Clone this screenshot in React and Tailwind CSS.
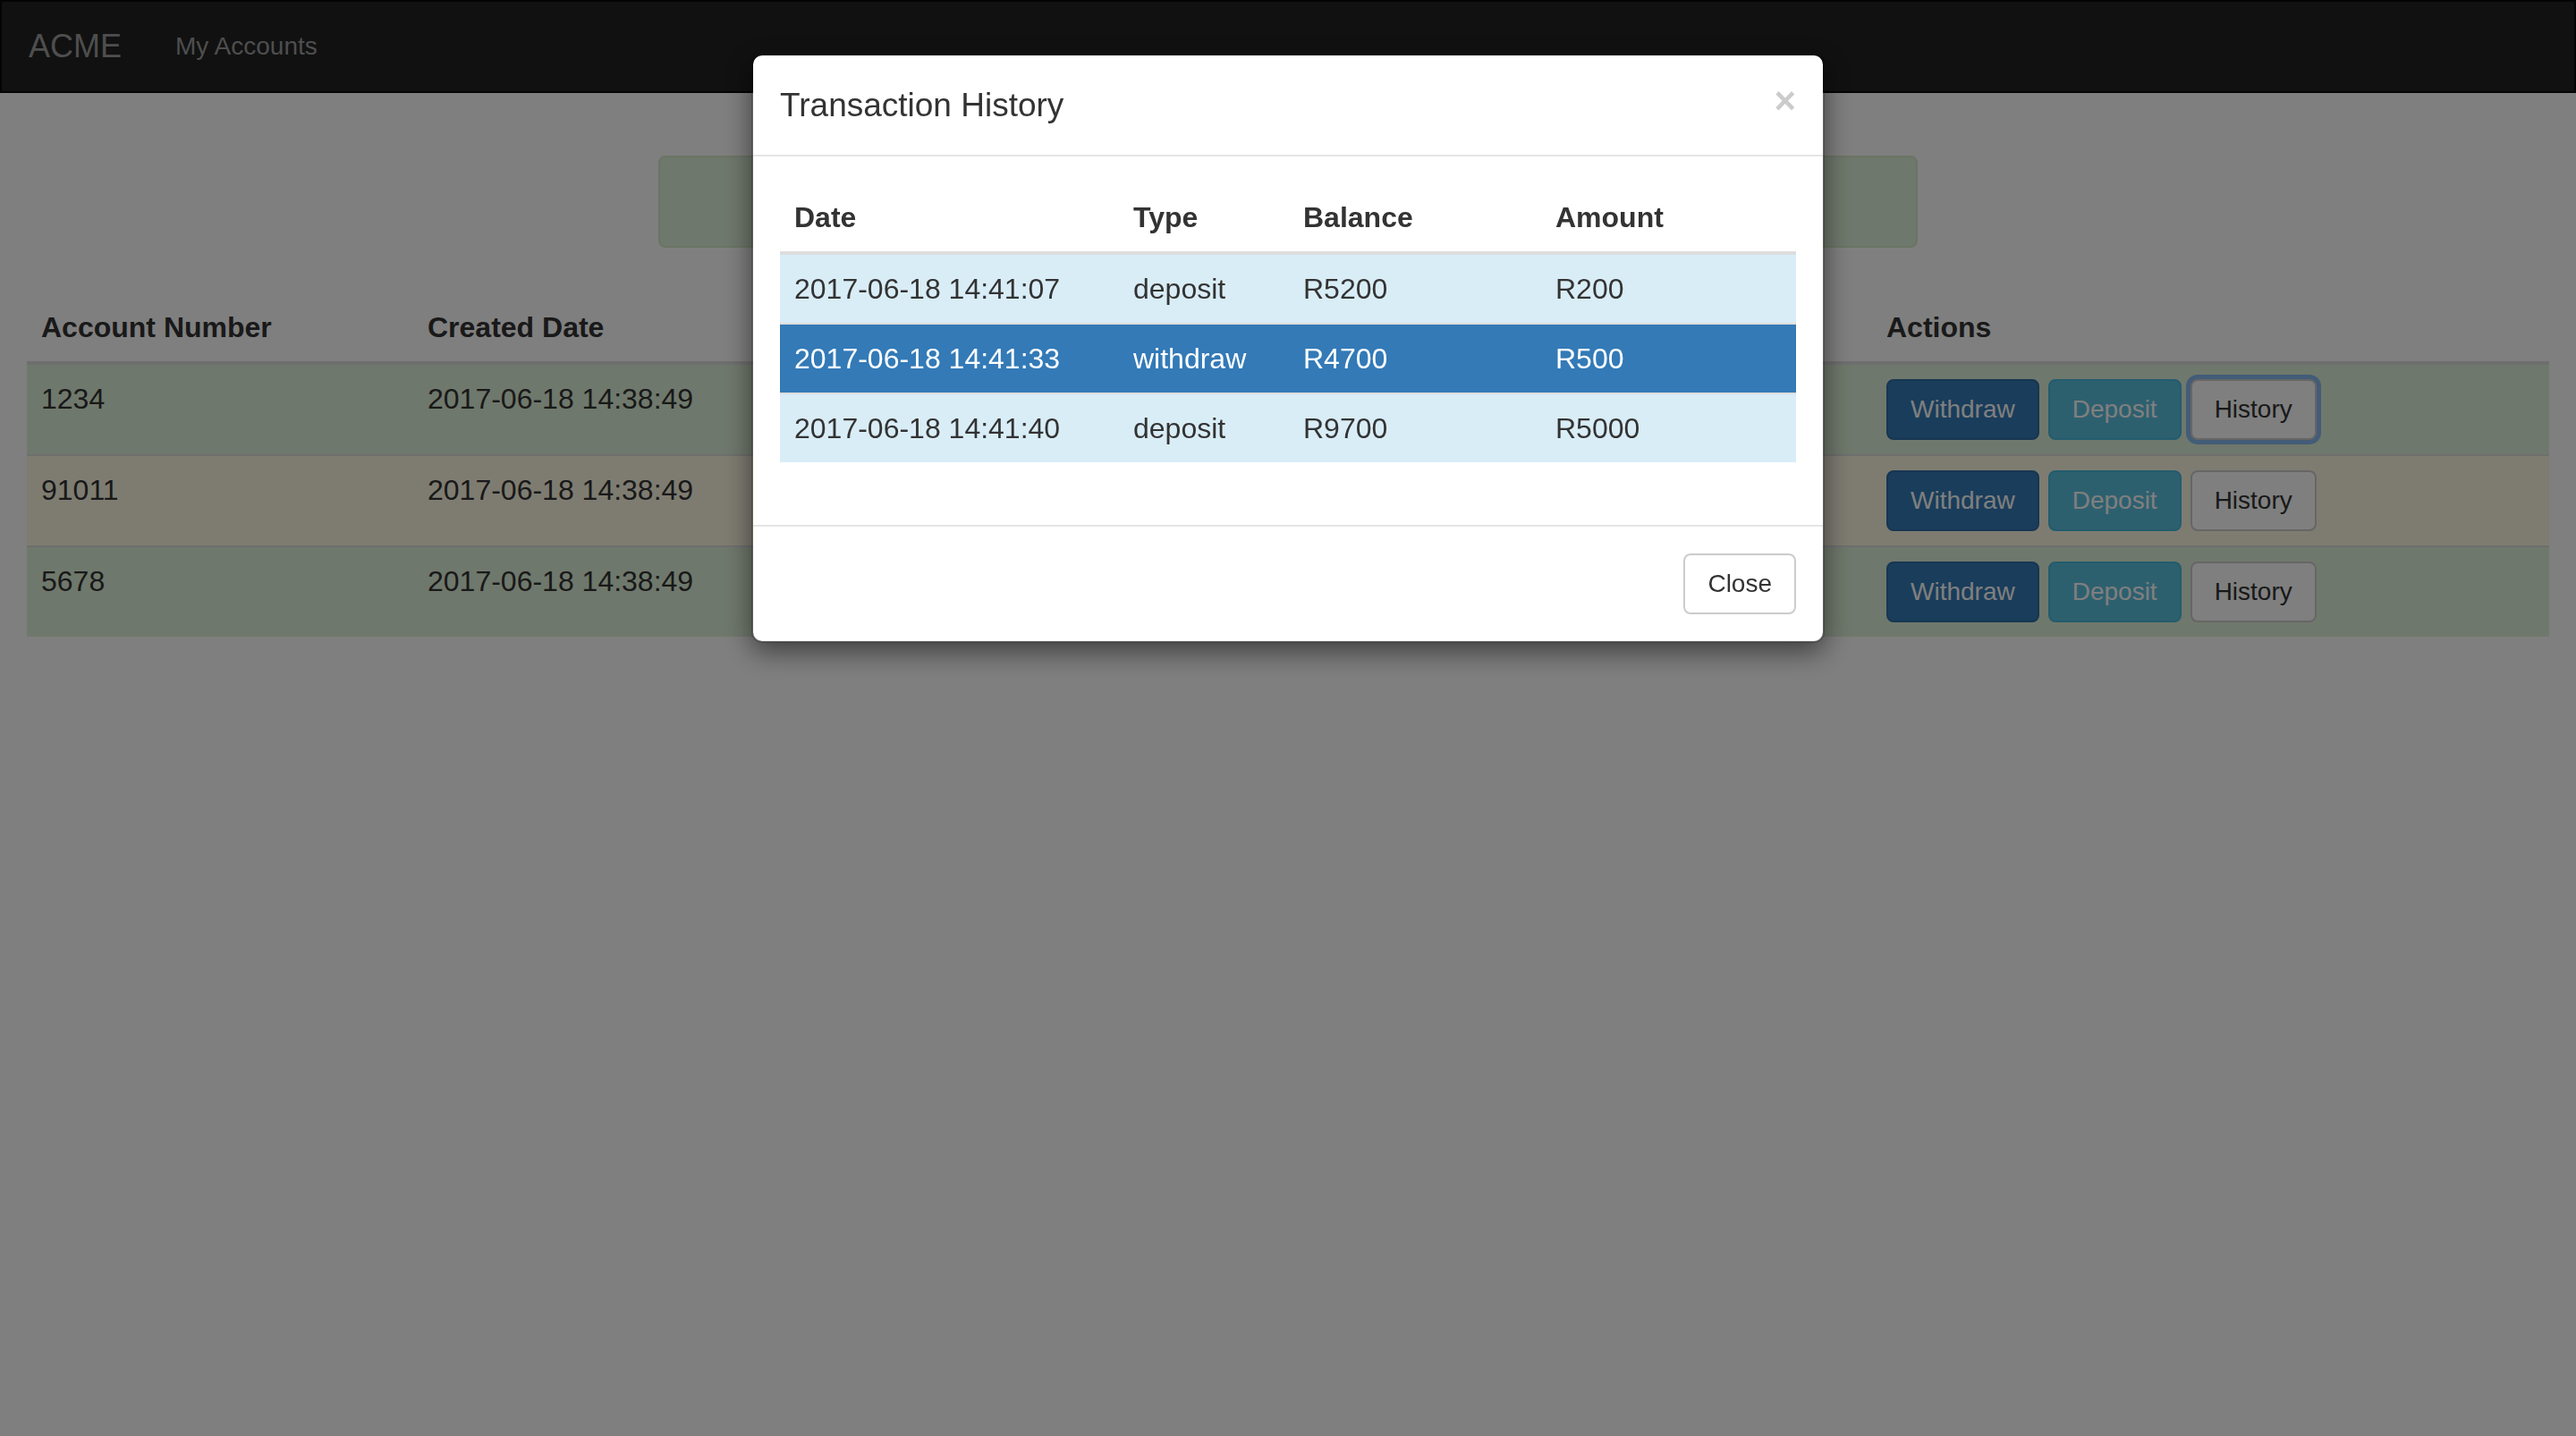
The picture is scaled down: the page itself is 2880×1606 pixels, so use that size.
import React from "react";

const accounts = [
  { number: "1234", created: "2017-06-18 14:38:49", balance: "R9700", tone: "success" },
  { number: "91011", created: "2017-06-18 14:38:49", balance: "R0", tone: "warning" },
  { number: "5678", created: "2017-06-18 14:38:49", balance: "R0", tone: "success" },
];

const transactions = [
  { date: "2017-06-18 14:41:07", type: "deposit", balance: "R5200", amount: "R200", active: false },
  { date: "2017-06-18 14:41:33", type: "withdraw", balance: "R4700", amount: "R500", active: true },
  { date: "2017-06-18 14:41:40", type: "deposit", balance: "R9700", amount: "R5000", active: false },
];

const rowTone = {
  success: "bg-[#dff0d8]",
  warning: "bg-[#fcf8e3]",
};

const Btn = ({ variant = "default", focused = false, children }) => {
  const styles = {
    primary: "bg-[#337ab7] border-[#2e6da4] text-white",
    info: "bg-[#5bc0de] border-[#46b8da] text-white",
    default: "bg-white border-[#ccc] text-[#333]",
  };
  return (
    <button
      className={`rounded-[8px] border-2 px-[25px] py-[12px] text-[28px] leading-[40px] whitespace-nowrap ${
        styles[variant]
      } ${focused ? "border-[#5694dc] shadow-[0_0_0_5px_#86b8ee]" : ""}`}
    >
      {children}
    </button>
  );
};

const Navbar = () => (
  <nav className="flex h-[104px] items-center border-2 border-[#080808] bg-[#222] px-[30px]">
    <span className="text-[36px] leading-[40px] text-[#9d9d9d]">ACME</span>
    <a className="ml-[60px] text-[28px] leading-[40px] text-[#9d9d9d]">My Accounts</a>
  </nav>
);

const AccountsTable = () => (
  <table className="mt-[51px] w-full table-fixed border-collapse text-left text-[32px] leading-[44px]">
    <thead>
      <tr>
        <th className="w-[432px] border-b-4 border-[#ddd] p-[16px] align-bottom font-bold">Account Number</th>
        <th className="w-[500px] border-b-4 border-[#ddd] p-[16px] align-bottom font-bold">Created Date</th>
        <th className="w-[1131px] border-b-4 border-[#ddd] p-[16px] align-bottom font-bold">Balance</th>
        <th className="w-[757px] border-b-4 border-[#ddd] p-[16px] align-bottom font-bold">Actions</th>
      </tr>
    </thead>
    <tbody>
      {accounts.map((acc, i) => (
        <tr key={acc.number} className={rowTone[acc.tone]}>
          <td className="border-t-2 border-[#ddd] p-[16px] align-top">{acc.number}</td>
          <td className="border-t-2 border-[#ddd] p-[16px] align-top">{acc.created}</td>
          <td className="border-t-2 border-[#ddd] p-[16px] align-top">{acc.balance}</td>
          <td className="border-t-2 border-[#ddd] p-[16px] align-top">
            <div className="flex gap-[10px]">
              <Btn variant="primary">Withdraw</Btn>
              <Btn variant="info">Deposit</Btn>
              <Btn focused={i === 0}>History</Btn>
            </div>
          </td>
        </tr>
      ))}
    </tbody>
  </table>
);

const HistoryModal = () => (
  <div className="fixed inset-0 overflow-y-auto">
    <div className="mx-auto mt-[60px] w-[1200px] rounded-[12px] border-2 border-black/20 bg-white bg-clip-padding shadow-[0_10px_30px_rgba(0,0,0,0.5)]">
      <div className="flex items-start justify-between border-b-2 border-[#e5e5e5] p-[30px]">
        <h4 className="text-[37px] font-medium leading-[51px] text-[#333]">Transaction History</h4>
        <button className="text-[42px] font-bold leading-none text-black opacity-20">×</button>
      </div>
      <div className="p-[30px]">
        <table className="mb-[40px] w-full table-fixed border-collapse text-left text-[32px] leading-[44px] text-[#333]">
          <thead>
            <tr>
              <th className="w-[379px] border-b-4 border-[#ddd] p-[16px] align-bottom font-bold">Date</th>
              <th className="w-[190px] border-b-4 border-[#ddd] p-[16px] align-bottom font-bold">Type</th>
              <th className="w-[282px] border-b-4 border-[#ddd] p-[16px] align-bottom font-bold">Balance</th>
              <th className="w-[285px] border-b-4 border-[#ddd] p-[16px] align-bottom font-bold">Amount</th>
            </tr>
          </thead>
          <tbody>
            {transactions.map((t) => (
              <tr key={t.date} className={t.active ? "bg-[#337ab7] text-white" : "bg-[#d9edf7]"}>
                <td className="border-t-2 border-[#ddd] p-[16px] align-top">{t.date}</td>
                <td className="border-t-2 border-[#ddd] p-[16px] align-top">{t.type}</td>
                <td className="border-t-2 border-[#ddd] p-[16px] align-top">{t.balance}</td>
                <td className="border-t-2 border-[#ddd] p-[16px] align-top">{t.amount}</td>
              </tr>
            ))}
          </tbody>
        </table>
      </div>
      <div className="flex justify-end border-t-2 border-[#e5e5e5] p-[30px]">
        <Btn>Close</Btn>
      </div>
    </div>
  </div>
);

export default function App() {
  return (
    <div className="min-h-screen bg-white font-['Liberation_Sans',Arial,sans-serif] text-[#333]">
      <Navbar />
      <div className="px-[30px]">
        <div className="mx-auto mt-[70px] h-[103px] w-[1408px] rounded-[8px] border-2 border-[#d6e9c6] bg-[#dff0d8]" />
        <AccountsTable />
      </div>
      <div className="fixed inset-0 bg-black/50" />
      <HistoryModal />
    </div>
  );
}
